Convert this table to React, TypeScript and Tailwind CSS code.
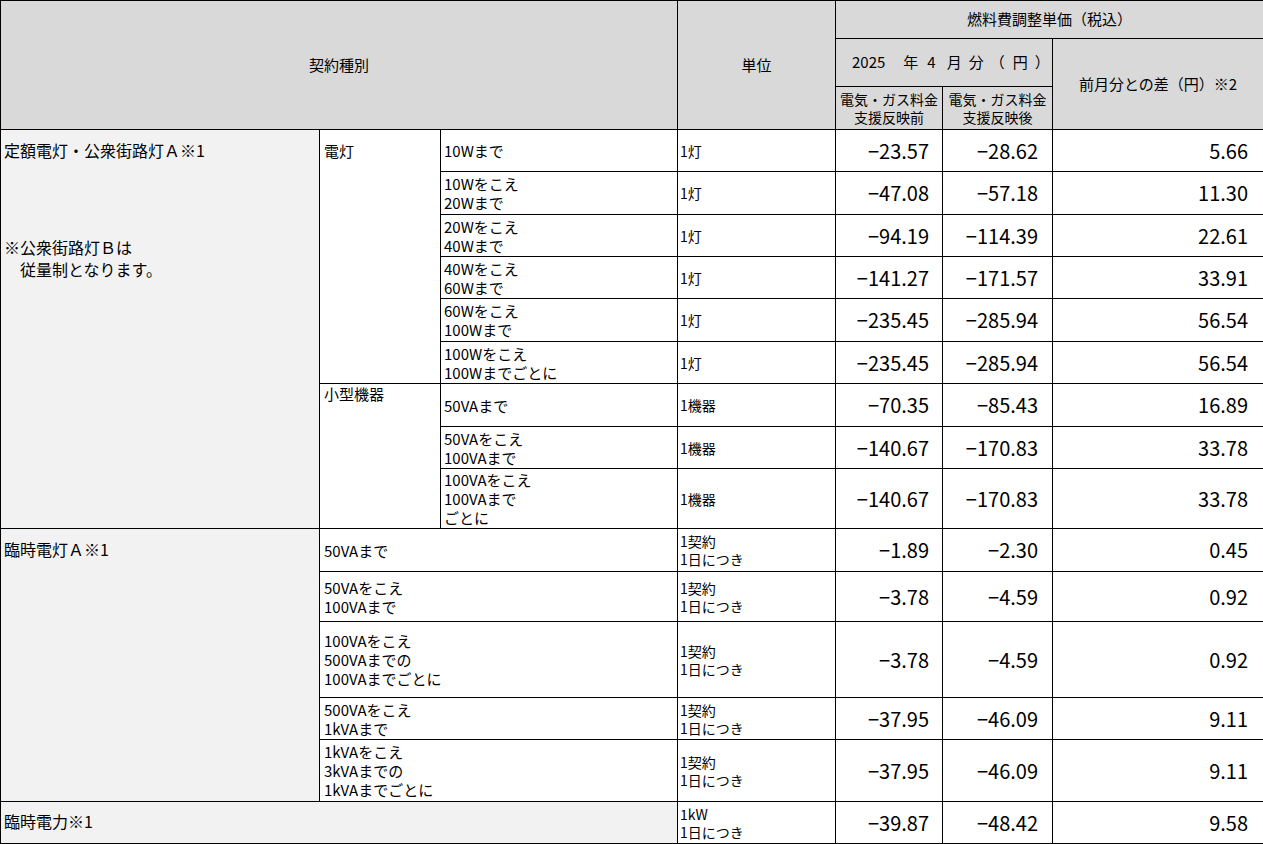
import React from "react"

/** 1行分のデータ（小区分・単位・単価3つ）*/
type Row = {
  h: string
  sub: string[]
  unit: string[]
  before: string
  after: string
  diff: string
}

const M = "\u2212"

const dento: Row[] = [
  { h: "h-[42px]", sub: ["10Wまで"], unit: ["1灯"], before: `${M}23.57`, after: `${M}28.62`, diff: "5.66" },
  { h: "h-[43px]", sub: ["10Wをこえ", "20Wまで"], unit: ["1灯"], before: `${M}47.08`, after: `${M}57.18`, diff: "11.30" },
  { h: "h-[42px]", sub: ["20Wをこえ", "40Wまで"], unit: ["1灯"], before: `${M}94.19`, after: `${M}114.39`, diff: "22.61" },
  { h: "h-[42px]", sub: ["40Wをこえ", "60Wまで"], unit: ["1灯"], before: `${M}141.27`, after: `${M}171.57`, diff: "33.91" },
  { h: "h-[43px]", sub: ["60Wをこえ", "100Wまで"], unit: ["1灯"], before: `${M}235.45`, after: `${M}285.94`, diff: "56.54" },
  { h: "h-[42px]", sub: ["100Wをこえ", "100Wまでごとに"], unit: ["1灯"], before: `${M}235.45`, after: `${M}285.94`, diff: "56.54" },
]

const kogata: Row[] = [
  { h: "h-[43px]", sub: ["50VAまで"], unit: ["1機器"], before: `${M}70.35`, after: `${M}85.43`, diff: "16.89" },
  { h: "h-[42px]", sub: ["50VAをこえ", "100VAまで"], unit: ["1機器"], before: `${M}140.67`, after: `${M}170.83`, diff: "33.78" },
  { h: "h-[60px]", sub: ["100VAをこえ", "100VAまで", "ごとに"], unit: ["1機器"], before: `${M}140.67`, after: `${M}170.83`, diff: "33.78" },
]

const rinjiDento: Row[] = [
  { h: "h-[43px]", sub: ["50VAまで"], unit: ["1契約", "1日につき"], before: `${M}1.89`, after: `${M}2.30`, diff: "0.45" },
  { h: "h-[50px]", sub: ["50VAをこえ", "100VAまで"], unit: ["1契約", "1日につき"], before: `${M}3.78`, after: `${M}4.59`, diff: "0.92" },
  { h: "h-[76px]", sub: ["100VAをこえ", "500VAまでの", "100VAまでごとに"], unit: ["1契約", "1日につき"], before: `${M}3.78`, after: `${M}4.59`, diff: "0.92" },
  { h: "h-[42px]", sub: ["500VAをこえ", "1kVAまで"], unit: ["1契約", "1日につき"], before: `${M}37.95`, after: `${M}46.09`, diff: "9.11" },
  { h: "h-[62px]", sub: ["1kVAをこえ", "3kVAまでの", "1kVAまでごとに"], unit: ["1契約", "1日につき"], before: `${M}37.95`, after: `${M}46.09`, diff: "9.11" },
]

const bd = "border border-black"

function Lines({ lines }: { lines: string[] }) {
  return (
    <>
      {lines.map((l, i) => (
        <div key={i}>{l}</div>
      ))}
    </>
  )
}

/** 単位＋単価3列 */
function Tail({ r }: { r: Row }) {
  const num = `${bd} text-right align-middle text-[20px] leading-[24px] whitespace-nowrap`
  return (
    <>
      <td className={`${bd} pl-[2px] align-middle text-[14px] leading-[18px]`}>
        <Lines lines={r.unit} />
      </td>
      <td className={`${num} pr-[13px]`}>{r.before}</td>
      <td className={`${num} pr-[14px]`}>{r.after}</td>
      <td className={`${num} pr-[15px]`}>{r.diff}</td>
    </>
  )
}

const subCell = `${bd} pl-[3px] align-middle text-[15px] leading-[19px] whitespace-nowrap`

export default function App() {
  return (
    <div className="bg-white">
      <table className="w-[1263px] table-fixed border-collapse font-['Noto_Sans_CJK_JP',sans-serif] text-black">
        <colgroup>
          <col className="w-[319px]" />
          <col className="w-[121px]" />
          <col className="w-[237px]" />
          <col className="w-[158px]" />
          <col className="w-[107px]" />
          <col className="w-[110px]" />
          <col className="w-[211px]" />
        </colgroup>
        <thead className="bg-[#d9d9d9]">
          <tr className="h-[38px]">
            <th colSpan={3} rowSpan={3} className={`${bd} text-center align-middle text-[15px] font-normal`}>
              契約種別
            </th>
            <th rowSpan={3} className={`${bd} text-center align-middle text-[15px] font-normal`}>
              単位
            </th>
            <th colSpan={3} className={`${bd} text-center align-middle text-[15px] font-normal`}>
              燃料費調整単価（税込）
            </th>
          </tr>
          <tr className="h-[48px]">
            <th colSpan={2} className={`${bd} pl-[16px] text-left align-middle text-[15px] font-normal`}>
              <span className="inline-flex items-center whitespace-nowrap">
                <span>2025</span>
                <span className="ml-[18px]">年</span>
                <span className="ml-[9px]">4</span>
                <span className="ml-[11px]">月</span>
                <span className="ml-[7px]">分</span>
                <span className="ml-[6px]">（</span>
                <span className="ml-[8px]">円</span>
                <span className="ml-[7px]">）</span>
              </span>
            </th>
            <th rowSpan={2} className={`${bd} text-center align-middle text-[15px] font-normal`}>
              前月分との差（円）※2
            </th>
          </tr>
          <tr className="h-[43px]">
            <th className={`${bd} text-center align-middle text-[14px] leading-[18px] font-normal whitespace-nowrap`}>
              <div>電気・ガス料金</div>
              <div>支援反映前</div>
            </th>
            <th className={`${bd} text-center align-middle text-[14px] leading-[18px] font-normal whitespace-nowrap`}>
              <div>電気・ガス料金</div>
              <div>支援反映後</div>
            </th>
          </tr>
        </thead>
        <tbody className="bg-white">
          {dento.map((r, i) => (
            <tr key={`d${i}`} className={r.h}>
              {i === 0 && (
                <td rowSpan={9} className={`${bd} bg-[#f2f2f2] pl-[3px] pt-[10px] align-top text-[16px] leading-[21px]`}>
                  <div>定額電灯・公衆街路灯Ａ※1</div>
                  <div className="mt-[75px] leading-[22px]">
                    <div>※公衆街路灯Ｂは</div>
                    <div>　従量制となります。</div>
                  </div>
                </td>
              )}
              {i === 0 && (
                <td rowSpan={6} className={`${bd} pl-[4px] pt-[10px] align-top text-[15px] leading-[21px]`}>
                  電灯
                </td>
              )}
              <td className={subCell}>
                <Lines lines={r.sub} />
              </td>
              <Tail r={r} />
            </tr>
          ))}
          {kogata.map((r, i) => (
            <tr key={`k${i}`} className={r.h}>
              {i === 0 && (
                <td rowSpan={3} className={`${bd} pl-[4px] align-top text-[15px] leading-[20px]`}>
                  小型機器
                </td>
              )}
              <td className={subCell}>
                <Lines lines={r.sub} />
              </td>
              <Tail r={r} />
            </tr>
          ))}
          {rinjiDento.map((r, i) => (
            <tr key={`r${i}`} className={r.h}>
              {i === 0 && (
                <td rowSpan={5} className={`${bd} bg-[#f2f2f2] pl-[3px] pt-[10px] align-top text-[16px] leading-[21px]`}>
                  臨時電灯Ａ※1
                </td>
              )}
              <td colSpan={2} className={`${bd} pl-[4px] align-middle text-[15px] leading-[19px] whitespace-nowrap`}>
                <Lines lines={r.sub} />
              </td>
              <Tail r={r} />
            </tr>
          ))}
          <tr className="h-[42px]">
            <td colSpan={3} className={`${bd} bg-[#f2f2f2] pl-[3px] pb-[3px] align-middle text-[16px] leading-[20px]`}>
              臨時電力※1
            </td>
            <Tail
              r={{
                h: "h-[42px]",
                sub: [],
                unit: ["1kW", "1日につき"],
                before: `${M}39.87`,
                after: `${M}48.42`,
                diff: "9.58",
              }}
            />
          </tr>
        </tbody>
      </table>
    </div>
  )
}
